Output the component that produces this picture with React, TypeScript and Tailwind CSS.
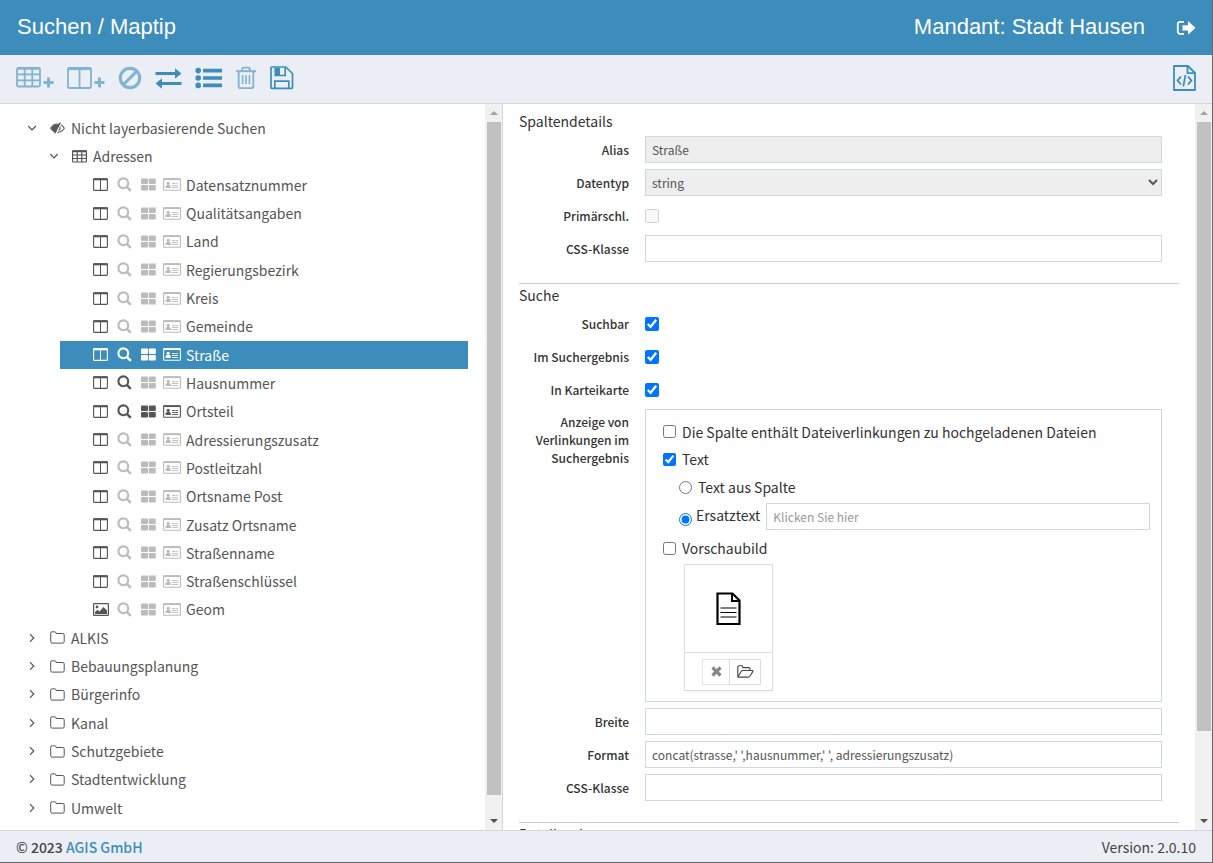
import { useState } from "react";
import type { ReactNode } from "react";

type FieldFlags = { search?: boolean; result?: boolean; card?: boolean };

const FIELDS: ({ name: string; geom?: boolean } & FieldFlags)[] = [
  { name: "Datensatznummer" },
  { name: "Qualitätsangaben" },
  { name: "Land" },
  { name: "Regierungsbezirk" },
  { name: "Kreis" },
  { name: "Gemeinde" },
  { name: "Straße", search: true, result: true, card: true },
  { name: "Hausnummer", search: true },
  { name: "Ortsteil", search: true, result: true, card: true },
  { name: "Adressierungszusatz" },
  { name: "Postleitzahl" },
  { name: "Ortsname Post" },
  { name: "Zusatz Ortsname" },
  { name: "Straßenname" },
  { name: "Straßenschlüssel" },
  { name: "Geom", geom: true },
];

const FOLDERS = ["ALKIS", "Bebauungsplanung", "Bürgerinfo", "Kanal", "Schutzgebiete", "Stadtentwicklung", "Umwelt"];

/* ---------- icons ---------- */

function Svg({ w, h, className = "", children }: { w: number; h: number; className?: string; children: ReactNode }) {
  return (
    <svg
      width={w}
      height={h}
      viewBox={`0 0 ${w} ${h}`}
      fill="none"
      stroke="currentColor"
      className={`shrink-0 ${className}`}
      aria-hidden="true"
    >
      {children}
    </svg>
  );
}

const TableAddIcon = () => (
  <Svg w={38} h={24}>
    <rect x="1" y="2" width="23" height="18.5" rx="1.5" strokeWidth="1.8" />
    <path d="M1 2.5h23" strokeWidth="2.4" />
    <path d="M1 8.3h23M1 14.3h23M8.7 2v18M16.3 2v18" strokeWidth="1.8" />
    <path d="M27.500 16.500h10M32.500 11.500v10" strokeWidth="3" />
  </Svg>
);

const ColumnAddIcon = () => (
  <Svg w={38} h={24}>
    <rect x="1" y="2" width="23" height="20" rx="1.5" strokeWidth="1.8" />
    <path d="M1 2.7h23" strokeWidth="2.8" />
    <path d="M12.5 2v20" strokeWidth="1.8" />
    <path d="M27.500 16.500h10M32.500 11.500v10" strokeWidth="3" />
  </Svg>
);

const BanIcon = () => (
  <Svg w={24} h={24}>
    <circle cx="12" cy="12" r="9.7" strokeWidth="3.2" />
    <path d="M5.4 18.6 18.6 5.4" strokeWidth="3" />
  </Svg>
);

const ExchangeIcon = () => (
  <Svg w={27} h={24}>
    <path d="M.5 7.500h20M26.500 17.500H7" strokeWidth="3" />
    <path d="m20 2.300 6.500 5.200-6.500 5.200zM7 12.300.5 17.500 7 22.700z" fill="currentColor" stroke="none" />
  </Svg>
);

const ListIcon = () => (
  <Svg w={27} h={24}>
    <g fill="currentColor" stroke="none">
      <circle cx="3.2" cy="4.6" r="2.8" />
      <circle cx="3.2" cy="12" r="2.8" />
      <circle cx="3.2" cy="19.4" r="2.8" />
      <rect x="8" y="2.8" width="19" height="3.6" rx="0.5" />
      <rect x="8" y="10.2" width="19" height="3.6" rx="0.5" />
      <rect x="8" y="17.6" width="19" height="3.6" rx="0.5" />
    </g>
  </Svg>
);

const TrashIcon = () => (
  <Svg w={22} h={24}>
    <path d="M1 5.2h20" strokeWidth="2" />
    <path d="M7 5V3.700q0-2 2-2h4q2 0 2 2V5" strokeWidth="1.8" />
    <path d="M3.700 5.500v14.700q0 2 2 2h10.600q2 0 2-2V5.500" strokeWidth="1.8" />
    <path d="M7.600 9v9M11 9v9M14.400 9v9" strokeWidth="1.6" />
  </Svg>
);

const SaveIcon = () => (
  <Svg w={24} h={24}>
    <path d="M1.800 1h14L22.500 7.500v14q0 .8-.8.8H1.800q-.8 0-.8-.8V1.800Q1 1 1.800 1z" strokeWidth="1.700" />
    <path d="M5.200 1.500v8h10v-8" strokeWidth="1.600" />
    <path d="M6 2h4v7H6z" fill="currentColor" stroke="none" />
    <path d="M4.800 22.500v-7.300h14v7.300" strokeWidth="1.700" />
  </Svg>
);

const FileCodeIcon = () => (
  <Svg w={23} h={28}>
    <path d="M1 2h14l7 7v17H1z" strokeWidth="1.800" strokeLinejoin="round" />
    <path d="M14.500 2v7.200H22" strokeWidth="1.800" />
    <path d="m8 12.500-3.400 4L8 20.500M15 12.500l3.400 4-3.400 4" strokeWidth="1.900" />
    <path d="m12.500 11-2.200 11.500" strokeWidth="1.700" />
  </Svg>
);

const SignOutIcon = () => (
  <Svg w={20} h={16}>
    <path d="M8 1.8H4q-2.200 0-2.200 2.200v7.600q0 2.200 2.200 2.200h4" strokeWidth="1.8" />
    <path d="M6.500 5.200H12V.9l7.500 6.900-7.500 6.900v-4.300H6.500z" fill="currentColor" stroke="none" />
  </Svg>
);

const ChevronIcon = ({ open }: { open?: boolean }) => (
  <Svg w={10} h={10}>
    <path d={open ? "M1.200 3 5 6.800 8.800 3" : "M3 1.200 6.800 5 3 8.800"} strokeWidth="1.200" />
  </Svg>
);

const EyeSlashIcon = () => (
  <Svg w={15} h={12}>
    <path d="M.7 6.200Q3.200 2 7.500 2q4.400 0 6.800 4.200-2.400 4-6.800 4Q3.200 10.200.7 6.200z" strokeWidth="1.100" />
    <path d="M1.200 6.200Q3.700 2.200 7.500 2.400l1.700.2L5 9.800Q2.700 9 1.200 6.200z" fill="currentColor" stroke="none" />
    <path d="M10.300.6 4.700 11.400" strokeWidth="1.300" />
    <path d="M11.700.9 6.100 11.600" stroke="#fff" strokeWidth="1" />
    <path d="M10 4.500q.8 2.200-1.300 4" strokeWidth="1.100" />
  </Svg>
);

const TableIcon = () => (
  <Svg w={15} h={13}>
    <rect x=".6" y=".8" width="13.8" height="11.2" rx=".8" strokeWidth="1.2" />
    <path d="M.5 1.300h14" strokeWidth="1.8" />
    <path d="M.6 5h13.800M.6 8.500h13.800M5.200 1v11M9.800 1v11" strokeWidth="1.2" />
  </Svg>
);

const ColumnsIcon = () => (
  <Svg w={15} h={13}>
    <rect x=".6" y=".8" width="13.8" height="11.6" rx=".6" strokeWidth="1.1" />
    <path d="M.5 1.300h14" strokeWidth="2" />
    <path d="M7.500 1v11" strokeWidth="1" />
  </Svg>
);

const ImageIcon = () => (
  <Svg w={16} h={13}>
    <rect x=".6" y=".6" width="14.8" height="11.8" rx=".6" strokeWidth="1.2" />
    <circle cx="4" cy="4" r="1.4" fill="currentColor" stroke="none" />
    <path d="M2 11V9l2.500-2.300L6.500 8.500l4-4.500L14 7.500V11z" fill="currentColor" stroke="none" />
  </Svg>
);

const SearchIcon = () => (
  <Svg w={15} h={15}>
    <circle cx="6.3" cy="6.3" r="4.9" strokeWidth="2.1" />
    <path d="m9.800 9.800 4 4" strokeWidth="2.500" />
  </Svg>
);

const GridIcon = () => (
  <Svg w={15} h={13}>
    <g fill="currentColor" stroke="none">
      <rect x="0" y="0.500" width="7" height="5.600" rx="1" />
      <rect x="7.800" y="0.500" width="7" height="5.600" rx="1" />
      <rect x="0" y="6.900" width="7" height="5.600" rx="1" />
      <rect x="7.800" y="6.900" width="7" height="5.600" rx="1" />
    </g>
  </Svg>
);

const CardIcon = () => (
  <Svg w={18} h={13}>
    <rect x=".6" y=".8" width="16.8" height="11.4" rx=".8" strokeWidth="1.1" />
    <path d="M.6 1.200h16.800" strokeWidth="1.700" />
    <circle cx="5.200" cy="5.300" r="1.600" fill="currentColor" stroke="none" />
    <path d="M2.600 10V8.600Q2.800 7 4.200 7h2Q7.600 7 7.800 8.600V10z" fill="currentColor" stroke="none" />
    <path d="M9 5.500h3.500M13.200 5.500H15M9 7.500h6M9 9.500h6" strokeWidth=".9" />
  </Svg>
);

const FolderIcon = () => (
  <Svg w={15} h={13}>
    <path
      d="M.7 10.700V2.200Q.7.800 2.100.8h2.600q1.200 0 1.300 1.200l.1.500h6.700q1.400 0 1.400 1.400v6.800q0 1.400-1.400 1.400H2.100Q.7 12.100.7 10.700z"
      strokeWidth="1"
    />
  </Svg>
);

const FolderOpenIcon = () => (
  <Svg w={17} h={13}>
    <path d="M.8 11V2Q.8.800 2 .8h2.600q1.100 0 1.200 1.200v.6h6q1.200 0 1.200 1.200v1.600" strokeWidth="1.100" />
    <path d="M.9 11.600 4.300 6.300q.5-.8 1.500-.8h9.600q1 0 .5.900l-3 4.800q-.6.900-1.600.9H1.600q-1 0-.7-.5z" strokeWidth="1.100" />
  </Svg>
);

const DocumentIcon = () => (
  <Svg w={26} h={34} className="text-black">
    <path d="M1.500 1.500h15l7 7v23.500h-22z" strokeWidth="2.200" />
    <path d="M16 1.500V9h7.500" strokeWidth="2" />
    <path d="M4.500 16h16M4.500 20.500h16M4.500 25h16" strokeWidth="1.200" />
  </Svg>
);

/* ---------- small parts ---------- */

// static scrollbar: the gap between `thumb` and the lower arrow is left to `rest`
function ScrollBar({ thumb, rest }: { thumb: string; rest: string }) {
  return (
    <div className="flex w-[17px] shrink-0 flex-col items-center bg-[#f1f1f1]" aria-hidden="true">
      <div className="flex h-[18px] shrink-0 items-center justify-center text-[#a3a3a3]">
        <Svg w={8} h={4}>
          <path d="M0 4 4 0l4 4z" fill="currentColor" stroke="none" />
        </Svg>
      </div>
      <div className={`w-[14px] bg-[#c1c1c1] ${thumb}`} />
      <div className={rest} />
      <div className="flex h-[18px] shrink-0 items-center justify-center text-[#505050]">
        <Svg w={8} h={4}>
          <path d="M0 0h8L4 4z" fill="currentColor" stroke="none" />
        </Svg>
      </div>
    </div>
  );
}

function ToolButton({ label, muted, children }: { label: string; muted?: boolean; children: ReactNode }) {
  return (
    <button type="button" aria-label={label} className={muted ? "opacity-60" : ""}>
      {children}
    </button>
  );
}

const inputClass = "h-[27px] w-full border border-[#d2d6de] px-1.5 text-xs text-[#555] placeholder:text-[#999]";

function Row({ label, id, children }: { label: string; id: string; children: ReactNode }) {
  return (
    <div className="grid h-[27px] grid-cols-[110px_1fr] items-center gap-4 pr-[17px]">
      <label htmlFor={id} className="text-right text-xs font-medium text-[#333]">
        {label}
      </label>
      <div className="flex items-center">{children}</div>
    </div>
  );
}

function CheckRow({ label, id, checked, disabled }: { label: string; id: string; checked?: boolean; disabled?: boolean }) {
  return (
    <Row label={label} id={id}>
      <input id={id} type="checkbox" defaultChecked={checked} disabled={disabled} className="size-3.5" />
    </Row>
  );
}

/* ---------- panes ---------- */

function SearchTree() {
  const [selected, setSelected] = useState("Straße");

  return (
    <ul className="flex min-w-0 flex-1 flex-col pt-2.5 pr-[17px] pb-2 text-sm text-[#555]">
      <li className="flex min-h-7 flex-1 items-center pl-[27px]">
        <ChevronIcon open />
        <span className="ml-[13px] flex items-center gap-1.5">
          <EyeSlashIcon />
          Nicht layerbasierende Suchen
        </span>
      </li>
      <li className="flex min-h-7 flex-1 items-center pl-[49px]">
        <ChevronIcon open />
        <span className="ml-[13px] flex items-center gap-1.5">
          <TableIcon />
          Adressen
        </span>
      </li>
      {FIELDS.map((f) => {
        const active = f.name === selected;
        const tone = (on?: boolean) => (active ? "text-white" : on ? "" : "text-[#bbb]");
        return (
          <li
            key={f.name}
            onClick={() => setSelected(f.name)}
            className={`ml-[60px] flex min-h-7 flex-1 cursor-pointer items-center pl-[33px] ${active ? "bg-[#3c8dbc] text-white" : ""}`}
          >
            <span className="w-6">{f.geom ? <ImageIcon /> : <ColumnsIcon />}</span>
            <span className={`w-6 ${tone(f.search)}`}>
              <SearchIcon />
            </span>
            <span className={`w-[22px] ${tone(f.result)}`}>
              <GridIcon />
            </span>
            <span className={`w-[23px] ${tone(f.card)}`}>
              <CardIcon />
            </span>
            {f.name}
          </li>
        );
      })}
      {FOLDERS.map((name) => (
        <li key={name} className="flex min-h-7 flex-1 items-center pl-[27px]">
          <ChevronIcon />
          <span className="ml-[13px] flex items-center gap-1.5">
            <FolderIcon />
            {name}
          </span>
        </li>
      ))}
    </ul>
  );
}

function LinkOptions() {
  return (
    <div className="flex flex-col border border-[#d2d6de] py-2.5 pr-[11px] pl-[17px] text-sm text-[#333]">
      <label className="flex h-[23px] items-center gap-1.5">
        <input type="checkbox" className="size-[13px]" />
        Die Spalte enthält Dateiverlinkungen zu hochgeladenen Dateien
      </label>
      <label className="mt-1 flex h-6 items-center gap-1.5">
        <input type="checkbox" defaultChecked className="size-[13px]" />
        Text
      </label>
      <label className="mt-1 ml-4 flex h-6 items-center gap-1.5">
        <input type="radio" name="linktext" className="size-[13px]" />
        Text aus Spalte
      </label>
      <div className="mt-1 ml-4 flex h-[27px]">
        <input id="ersatz" type="radio" name="linktext" defaultChecked className="mt-2.5 size-[13px]" />
        <label htmlFor="ersatz" className="ml-1 h-6 leading-6">
          Ersatztext
        </label>
        <input
          type="text"
          placeholder="Klicken Sie hier"
          aria-label="Ersatztext Inhalt"
          className={`${inputClass} ml-1.5 min-w-0 flex-1`}
        />
      </div>
      <label className="mt-1.5 flex h-6 items-center gap-1.5">
        <input type="checkbox" className="size-[13px]" />
        Vorschaubild
      </label>
      <div className="mt-1 ml-[21px] w-[89px] border border-[#ddd] shadow-xs">
        <div className="flex h-[88px] items-center justify-center border-b border-[#ddd]">
          <DocumentIcon />
        </div>
        <div className="flex h-[37px] items-center pl-[17px]">
          <button
            type="button"
            aria-label="Bild entfernen"
            className="flex h-[26px] w-[27px] items-center justify-center border border-r-0 border-[#e5e5e5] text-[#888]"
          >
            <Svg w={11} h={11}>
              <path d="m1.500 1.500 8 8m0-8-8 8" strokeWidth="3.200" />
            </Svg>
          </button>
          <button
            type="button"
            aria-label="Bild auswählen"
            className="flex h-[26px] w-8 items-center justify-center border border-[#ddd] text-[#444]"
          >
            <FolderOpenIcon />
          </button>
        </div>
      </div>
    </div>
  );
}

function DetailForm() {
  return (
    <form className="min-w-0 flex-1 overflow-hidden px-4 pt-1.5">
      <h2 className="h-[26px] text-sm leading-[22px] text-[#333]">Spaltendetails</h2>
      <div className="flex flex-col gap-1.5">
        <Row label="Alias" id="alias">
          <input id="alias" type="text" readOnly defaultValue="Straße" className={`${inputClass} bg-[#eee]`} />
        </Row>
        <Row label="Datentyp" id="datentyp">
          <select id="datentyp" className="h-[27px] w-full border border-[#d2d6de] bg-[#eee] px-0.5 text-xs text-[#555]">
            <option>string</option>
          </select>
        </Row>
        <CheckRow label="Primärschl." id="primaer" disabled />
        <Row label="CSS-Klasse" id="css1">
          <input id="css1" type="text" className={inputClass} />
        </Row>
      </div>

      <hr className="mt-[21px] border-[#ccc]" />
      <h2 className="h-[26px] text-sm leading-[22px] text-[#333]">Suche</h2>
      <div className="flex flex-col gap-1.5">
        <CheckRow label="Suchbar" id="suchbar" checked />
        <CheckRow label="Im Suchergebnis" id="ergebnis" checked />
        <CheckRow label="In Karteikarte" id="karteikarte" checked />
        <div className="grid grid-cols-[110px_1fr] gap-4 pr-[17px]">
          <div className="pt-1 text-right text-xs leading-[18px] font-medium text-[#333]">
            Anzeige von Verlinkungen im Suchergebnis
          </div>
          <LinkOptions />
        </div>
        <Row label="Breite" id="breite">
          <input id="breite" type="text" className={inputClass} />
        </Row>
        <Row label="Format" id="format">
          <input
            id="format"
            type="text"
            defaultValue="concat(strasse,' ',hausnummer,' ', adressierungszusatz)"
            className={inputClass}
          />
        </Row>
        <Row label="CSS-Klasse" id="css2">
          <input id="css2" type="text" className={inputClass} />
        </Row>
      </div>

      <hr className="mt-[21px] border-[#ccc]" />
      <h2 className="text-sm leading-[22px] text-[#333]">Detailsuche</h2>
    </form>
  );
}

export default function App() {
  return (
    <div className="flex h-screen flex-col overflow-hidden border-r border-b border-[#666] bg-white font-['Noto_Sans_CJK_SC',sans-serif]">
      <header className="flex h-[55px] shrink-0 items-center bg-[#3c8dbc] pr-4 pb-0.5 pl-[17px] font-['Liberation_Sans',Arial,sans-serif] text-[22px] text-white">
        <h1>Suchen / Maptip</h1>
        <span className="mr-[31px] ml-auto">Mandant: Stadt Hausen</span>
        <button type="button" aria-label="Abmelden" className="pt-0.5">
          <SignOutIcon />
        </button>
      </header>

      <div className="flex h-[49px] shrink-0 items-center border-b border-[#d2d6de] bg-[#ebeff5] px-4 pb-0.5 text-[#3c8dbc]">
        <div className="flex items-center gap-[13px]">
          <ToolButton label="Tabelle hinzufügen" muted>
            <TableAddIcon />
          </ToolButton>
          <ToolButton label="Spalte hinzufügen" muted>
            <ColumnAddIcon />
          </ToolButton>
          <ToolButton label="Deaktivieren" muted>
            <BanIcon />
          </ToolButton>
          <ToolButton label="Tauschen">
            <ExchangeIcon />
          </ToolButton>
          <ToolButton label="Liste">
            <ListIcon />
          </ToolButton>
          <ToolButton label="Löschen" muted>
            <TrashIcon />
          </ToolButton>
          <ToolButton label="Speichern">
            <SaveIcon />
          </ToolButton>
        </div>
        <button type="button" aria-label="Quelltext" className="ml-auto">
          <FileCodeIcon />
        </button>
      </div>

      <main className="flex min-h-0 flex-1">
        <nav className="flex w-[503px] shrink-0 overflow-hidden border-r border-[#d2d6de]">
          <SearchTree />
          <ScrollBar thumb="grow-[673]" rest="grow-[17]" />
        </nav>
        <section className="flex min-w-0 flex-1">
          <DetailForm />
          <ScrollBar thumb="grow-[609]" rest="grow-[81]" />
        </section>
      </main>

      <footer className="flex h-8 shrink-0 items-center justify-between border-t border-[#d2d6de] bg-[#ebeff5] px-4 text-sm text-[#444]">
        <span className="font-medium">
          © 2023{" "}
          <a href="#" className="text-[#3c8dbc]">
            AGIS GmbH
          </a>
        </span>
        <span>Version: 2.0.10</span>
      </footer>
    </div>
  );
}
